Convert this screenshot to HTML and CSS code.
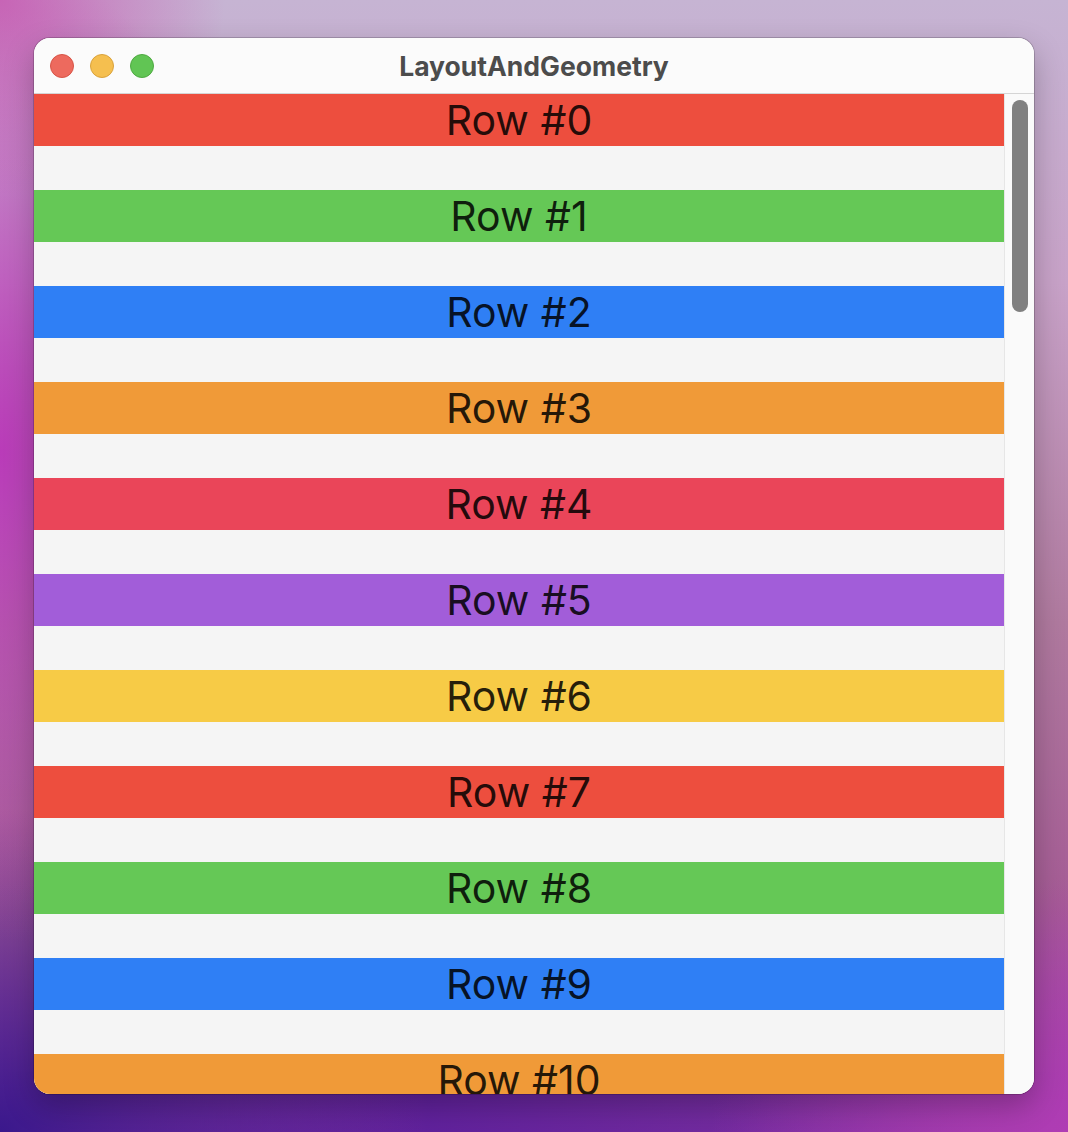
FILE: index.html
```html
<!DOCTYPE html>
<html>
<head>
  <title>LayoutAndGeometry</title>
  <meta name="viewport" content="width=device-width, initial-scale=1">
  <link rel="stylesheet" href="styles.css">
</head>
<body>
  <div class="window">
    <div class="titlebar">
      <div class="lights">
        <span class="light close"></span>
        <span class="light minimize"></span>
        <span class="light zoom"></span>
      </div>
      <div class="title">LayoutAndGeometry</div>
    </div>

    <div class="content">
      <div class="list">
        <div class="row red">Row #0</div>
        <div class="row green">Row #1</div>
        <div class="row blue">Row #2</div>
        <div class="row orange">Row #3</div>
        <div class="row pink">Row #4</div>
        <div class="row purple">Row #5</div>
        <div class="row yellow">Row #6</div>
        <div class="row red">Row #7</div>
        <div class="row green">Row #8</div>
        <div class="row blue">Row #9</div>
        <div class="row orange">Row #10</div>
      </div>
      <div class="scroll-track">
        <div class="scroll-thumb"></div>
      </div>
    </div>
  </div>
</body>
</html>
```

FILE: styles.css
```css
html, body {
  height: 100%;
}
body {
  margin: 0;
  padding: 38px 0 0 34px;
  box-sizing: border-box;
  overflow: hidden;
  font-family: Inter, "Liberation Sans", sans-serif;
  background:
    radial-gradient(ellipse 300px 260px at 0% 0%, rgba(200, 70, 170, 0.7), rgba(200, 70, 170, 0) 75%),
    radial-gradient(ellipse 380px 650px at 0% 40%, rgba(185, 55, 185, 0.95), rgba(185, 55, 185, 0) 75%),
    radial-gradient(ellipse 500px 380px at 0% 100%, rgba(58, 24, 140, 1), rgba(58, 24, 140, 0) 85%),
    radial-gradient(ellipse 420px 300px at 100% 100%, rgba(175, 60, 180, 1), rgba(175, 60, 180, 0) 85%),
    linear-gradient(90deg, rgba(70, 26, 150, 0) 0%, rgba(90, 30, 155, 0.9) 40%, rgba(90, 30, 155, 0.6) 70%, rgba(90, 30, 155, 0) 100%) bottom / 100% 60px no-repeat,
    linear-gradient(180deg, #c6b4d3 0%, #c8a2c8 25%, #b07a9f 55%, #a55c95 80%, #9a3ea6 100%);
}

/* window frame */
.window {
  width: 1000px;
  height: 1056px;
  border-radius: 16px;
  overflow: hidden;
  background: #fbfbfb;
  display: flex;
  flex-direction: column;
  box-shadow: 0 0 0 1px rgba(0, 0, 0, 0.18), 0 12px 30px rgba(0, 0, 0, 0.25);
}
.titlebar {
  position: relative;
  height: 56px;
  flex-shrink: 0;
  display: flex;
  align-items: center;
  justify-content: center;
  background: #fbfbfb;
  border-bottom: 1px solid rgba(0, 0, 0, 0.15);
  box-sizing: border-box;
}
.lights {
  position: absolute;
  left: 16px;
  top: 16px;
  display: flex;
  gap: 16px;
}
.light {
  width: 24px;
  height: 24px;
  border-radius: 50%;
  box-sizing: border-box;
}
.close {
  background: #ed6a5e;
  border: 1px solid #d75447;
}
.minimize {
  background: #f5bf4f;
  border: 1px solid #d9a23c;
}
.zoom {
  background: #61c554;
  border: 1px solid #4fa942;
}
.title {
  font-size: 26.5px;
  font-weight: 700;
  color: #4c4c4c;
}

/* scrolling list */
.content {
  flex: 1;
  display: flex;
  min-height: 0;
}
.list {
  flex: 1;
  background: #f5f5f5;
  overflow: hidden;
}
.row {
  height: 52px;
  margin-bottom: 44px;
  display: flex;
  align-items: center;
  justify-content: center;
  font-size: 41px;
  color: rgba(0, 0, 0, 0.85);
}
.red { background: #ed4e3e; }
.green { background: #65c856; }
.blue { background: #2f7ff5; }
.orange { background: #f09a38; }
.pink { background: #ea4559; }
.purple { background: #a25dd9; }
.yellow { background: #f7cb46; }

.scroll-track {
  width: 30px;
  flex-shrink: 0;
  background: #fafafa;
  border-left: 1px solid #e6e6e6;
  padding: 6px 0 0 7px;
  box-sizing: border-box;
}
.scroll-thumb {
  width: 16px;
  height: 212px;
  border-radius: 8px;
  background: #808080;
}
```
